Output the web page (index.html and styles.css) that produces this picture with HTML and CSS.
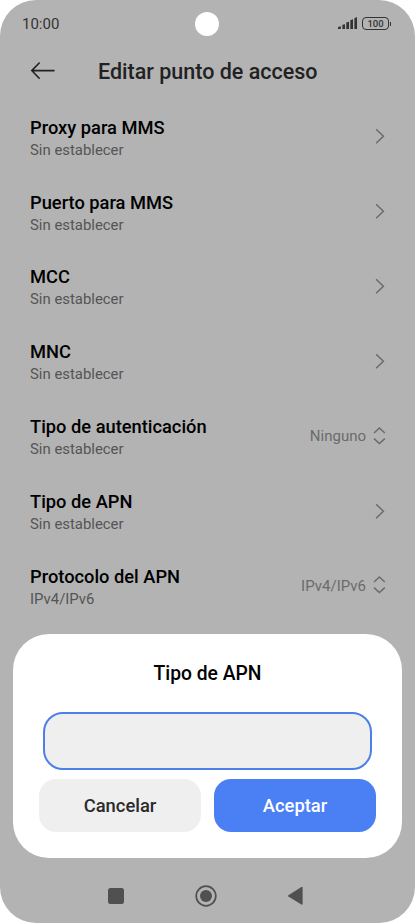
FILE: index.html
```html
<!DOCTYPE html>
<html lang="es">
<head>
    <meta charset="UTF-8">
    <meta name="viewport" content="width=device-width, initial-scale=1.0">
    <title>Editar punto de acceso</title>
    <link rel="stylesheet" href="styles.css">
</head>
<body>
    <div class="screen">
        <div class="status-bar">
            <span class="clock">10:00</span>
            <span class="camera"></span>
            <div class="status-icons">
                <svg class="signal" width="20" height="12" viewBox="0 0 20 12">
                    <path d="M0 12V10.4Q0 9.8 2.8 9.2V12ZM4.4 12V7.8L7 7.2V12ZM8.3 12V5.6L11 4.8V12ZM12.3 12V3.2L15 2.2V12ZM16.4 12V1.2L19 0V12Z"/>
                </svg>
                <div class="battery">100</div>
            </div>
        </div>

        <header class="header">
            <svg class="back" width="25" height="18" viewBox="0 0 25 18">
                <path d="M24 8.6H1.8M9.2 1L1.8 8.6L9.2 16.2"/>
            </svg>
            <h1>Editar punto de acceso</h1>
        </header>

        <ul class="settings">
            <li>
                <div class="label"><h2>Proxy para MMS</h2><p>Sin establecer</p></div>
                <svg class="chevron" width="10" height="16" viewBox="0 0 10 16"><path d="M1.1 1.2L8.4 8.2L1.1 15.2"/></svg>
            </li>
            <li>
                <div class="label"><h2>Puerto para MMS</h2><p>Sin establecer</p></div>
                <svg class="chevron" width="10" height="16" viewBox="0 0 10 16"><path d="M1.1 1.2L8.4 8.2L1.1 15.2"/></svg>
            </li>
            <li>
                <div class="label"><h2>MCC</h2><p>Sin establecer</p></div>
                <svg class="chevron" width="10" height="16" viewBox="0 0 10 16"><path d="M1.1 1.2L8.4 8.2L1.1 15.2"/></svg>
            </li>
            <li>
                <div class="label"><h2>MNC</h2><p>Sin establecer</p></div>
                <svg class="chevron" width="10" height="16" viewBox="0 0 10 16"><path d="M1.1 1.2L8.4 8.2L1.1 15.2"/></svg>
            </li>
            <li>
                <div class="label"><h2>Tipo de autenticación</h2><p>Sin establecer</p></div>
                <span class="value">Ninguno</span>
                <svg class="updown" width="12" height="18" viewBox="0 0 12 18"><path d="M1 6L6.4 1L11.8 6M1 11.6L6.4 16.6L11.8 11.6"/></svg>
            </li>
            <li>
                <div class="label"><h2>Tipo de APN</h2><p>Sin establecer</p></div>
                <svg class="chevron" width="10" height="16" viewBox="0 0 10 16"><path d="M1.1 1.2L8.4 8.2L1.1 15.2"/></svg>
            </li>
            <li>
                <div class="label"><h2>Protocolo del APN</h2><p>IPv4/IPv6</p></div>
                <span class="value">IPv4/IPv6</span>
                <svg class="updown" width="12" height="18" viewBox="0 0 12 18"><path d="M1 6L6.4 1L11.8 6M1 11.6L6.4 16.6L11.8 11.6"/></svg>
            </li>
        </ul>

        <nav class="nav-bar">
            <svg width="16" height="16" viewBox="0 0 16 16"><rect width="16" height="16" rx="2.5"/></svg>
            <svg width="22" height="22" viewBox="0 0 22 22"><circle class="ring" cx="11" cy="11" r="9.8"/><circle cx="11" cy="11" r="6"/></svg>
            <svg width="16" height="20" viewBox="0 0 16 20"><path d="M1.4 9.2L14.4 1Q15.6 .4 15.6 1.8V17.8Q15.6 19.2 14.4 18.6L1.4 10.6Q.4 9.9 1.4 9.2Z"/></svg>
        </nav>

        <div class="dialog">
            <h2>Tipo de APN</h2>
            <input type="text" aria-label="Tipo de APN">
            <div class="buttons">
                <button class="cancel">Cancelar</button>
                <button class="accept">Aceptar</button>
            </div>
        </div>
    </div>
</body>
</html>
```
FILE: styles.css
```css
* {
    box-sizing: border-box;
}
body {
    margin: 0;
    background: #fff;
    font-family: Roboto, sans-serif;
}
h1, h2, p, ul {
    margin: 0;
    padding: 0;
}
.screen {
    position: relative;
    display: flex;
    flex-direction: column;
    width: 415px;
    height: 923px;
    background: #b3b3b3;
    border-radius: 36px;
    overflow: hidden;
}
.status-bar {
    display: grid;
    grid-template-columns: 1fr 24px 1fr;
    align-items: center;
    height: 47px;
    padding: 0 23px 0 22px;
}
.clock {
    font-size: 15px;
    font-weight: 450;
    line-height: 18px;
    color: #333;
}
.camera {
    width: 24px;
    height: 24px;
    border-radius: 50%;
    background: #fff;
}
.status-icons {
    display: flex;
    justify-content: flex-end;
    align-items: center;
    gap: 4px;
    padding-right: 3px;
    margin-top: -1px;
}
.signal {
    fill: #333;
}
.battery {
    position: relative;
    width: 27px;
    height: 13px;
    border: 1px solid #333;
    border-radius: 4px;
    font-size: 9.5px;
    font-weight: 500;
    line-height: 11px;
    text-align: center;
    color: #333;
}
.battery::after {
    content: "";
    position: absolute;
    right: -3px;
    top: 4px;
    width: 1px;
    height: 4px;
    background: #333;
}
.header {
    display: flex;
    align-items: center;
    height: 48px;
    padding-left: 30px;
}
.back {
    fill: none;
    stroke: #222;
    stroke-width: 1.6;
    stroke-linecap: round;
}
.header h1 {
    margin-left: 43px;
    font-size: 21.5px;
    font-weight: 500;
    color: #222;
}
.settings {
    list-style: none;
    margin-top: 4px;
    padding: 0 30px;
}
.settings li {
    display: flex;
    align-items: center;
    height: 74.85px;
}
.label {
    flex: 1;
    padding-top: 3.6px;
}
.label h2 {
    font-size: 18.3px;
    font-weight: 500;
    line-height: 23px;
    color: #000;
}
.label p {
    font-size: 14.9px;
    line-height: 22px;
    color: #555;
}
.value {
    margin-right: 7px;
    padding-top: 1px;
    font-size: 15px;
    color: #6b6b6b;
}
.chevron, .updown {
    fill: none;
    stroke: #6b6b6b;
    stroke-width: 1.5;
    overflow: visible;
}
.nav-bar {
    display: flex;
    align-items: center;
    justify-content: space-between;
    height: 54px;
    margin-top: auto;
    padding: 0 112px 0 108px;
    fill: #505050;
}
.nav-bar .ring {
    fill: none;
    stroke: #505050;
    stroke-width: 1.7;
}
.dialog {
    position: absolute;
    left: 13px;
    right: 13px;
    bottom: 65px;
    height: 224px;
    padding: 0 26px;
    background: #fff;
    border-radius: 36px;
}
.dialog h2 {
    padding-top: 29px;
    font-size: 19.3px;
    font-weight: 500;
    line-height: 22px;
    text-align: center;
}
.dialog input {
    display: block;
    width: 329px;
    height: 58px;
    margin: 27px auto 9px;
    padding: 0 16px;
    border: 2px solid #4c80e8;
    border-radius: 20px;
    outline: none;
    background: #efefef;
    font: 18px Roboto, sans-serif;
}
.buttons {
    display: flex;
    gap: 13px;
}
.buttons button {
    flex: 1;
    height: 53px;
    padding: 0;
    border: none;
    border-radius: 17px;
    font: 500 18.4px Roboto, sans-serif;
}
.cancel {
    background: #efefef;
    color: #2b2b2b;
}
.accept {
    background: #4b80f5;
    color: #fff;
}
```
